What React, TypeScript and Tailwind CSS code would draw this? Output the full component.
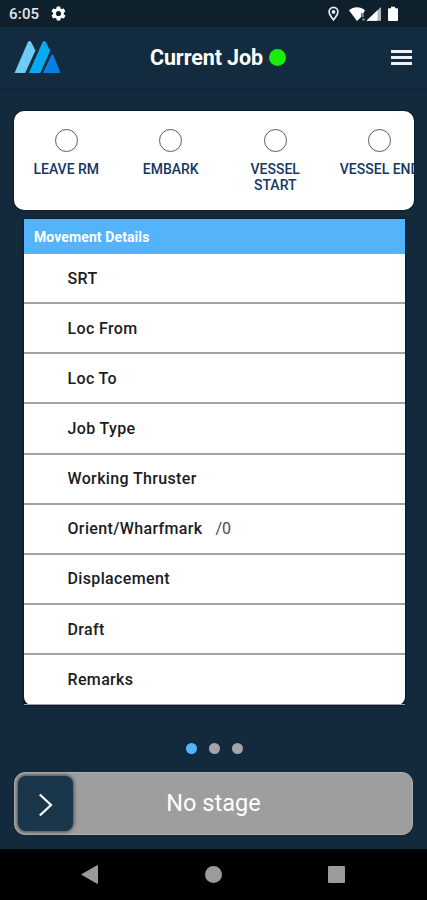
import React from 'react';

const stages = ['LEAVE RM', 'EMBARK', 'VESSEL START', 'VESSEL END'];

const details = [
  { label: 'SRT' },
  { label: 'Loc From' },
  { label: 'Loc To' },
  { label: 'Job Type' },
  { label: 'Working Thruster' },
  { label: 'Orient/Wharfmark', value: '/0' },
  { label: 'Displacement' },
  { label: 'Draft' },
  { label: 'Remarks' },
];

const StatusBar = () => (
  <div className="h-[27px] shrink-0 bg-[#0f202d] flex items-center justify-between pl-[9px] pr-[28px] text-white">
    <div className="flex items-center gap-[11px]">
      <span className="pt-px text-[15px] leading-none font-medium tracking-[0.2px] text-[#e4e7e9]">6:05</span>
      <svg width="17" height="17" viewBox="0 0 24 24" fill="white">
        <path d="M19.4 13a7.5 7.5 0 0 0 0-2l2.1-1.7c.2-.1.2-.4.1-.6l-2-3.5c-.1-.2-.4-.3-.6-.2l-2.5 1a7.3 7.3 0 0 0-1.7-1l-.4-2.6a.5.5 0 0 0-.5-.4h-4a.5.5 0 0 0-.5.4L9 5a7.7 7.7 0 0 0-1.7 1l-2.5-1c-.2-.1-.5 0-.6.2l-2 3.5c-.1.2-.1.5.1.6L4.5 11a7.5 7.5 0 0 0 0 2l-2.1 1.7c-.2.1-.2.4-.1.6l2 3.5c.1.2.4.3.6.2l2.5-1a7.3 7.3 0 0 0 1.7 1l.4 2.6c0 .2.2.4.5.4h4c.2 0 .5-.2.5-.4L15 19a7.7 7.7 0 0 0 1.7-1l2.5 1c.2.1.5 0 .6-.2l2-3.5c.1-.2.1-.5-.1-.6L19.4 13z" />
        <circle cx="12" cy="12" r="3.6" fill="#0f202d" />
      </svg>
    </div>
    <svg width="72" height="18" viewBox="0 0 72 18">
      <path d="M6.5 14.8C4.1 11.8 2.1 9.7 2.1 6.7a4.4 4.4 0 0 1 8.8 0c0 3-2 5.1-4.4 8.1z" fill="none" stroke="#e8ebed" strokeWidth="1.7" />
      <circle cx="6.5" cy="6.9" r="1.9" fill="#e8ebed" />
      <path d="M22 5.2C26.500 1.3 33.500 1.3 38 5.2L36.500 8H34v4.300L30 16z" fill="white" />
      <path d="M35.500 8v4M36.500 13.500v2" fill="none" stroke="#9aa3a9" strokeWidth="2" />
      <path d="M39.5 15.7L54 2v13.7z" fill="#b4bbc0" />
      <path d="M39.5 15.7L50.5 5.3v10.4z" fill="white" />
      <path d="M62 3.2h2V1.7h4v1.5h2a1 1 0 0 1 1 1v10.8a1 1 0 0 1-1 1h-8a1 1 0 0 1-1-1V4.2a1 1 0 0 1 1-1z" fill="white" />
    </svg>
  </div>
);

const Logo = () => (
  <svg width="48" height="34" viewBox="0 0 48 34">
    <path d="M.5 33L13.8 2.3Q15.5-.2 17.2 2.3L21.500 10.500 11.200 33z" fill="#6fcaf5" />
    <path d="M14.8 33L28.5 2.3Q30.2-.2 31.9 2.3L36.2 10.800 26.300 33z" fill="#05aaf1" />
    <path d="M29 33L37.1 15.5Q38.3 13.7 39.5 15.5L46.5 33z" fill="#087fe5" />
  </svg>
);

const Header = () => (
  <header className="h-[60px] shrink-0 bg-[#132b3e] grid grid-cols-[1fr_auto_1fr] items-center px-[14px]">
    <Logo />
    <div className="flex items-center gap-[6px] pl-[9px]">
      <h1 className="pt-px text-[21.5px] leading-none font-bold text-white tracking-[-0.1px]">Current Job</h1>
      <span className="w-[17px] h-[17px] rounded-full bg-[#18ee08]" />
    </div>
    <div className="justify-self-end mr-px w-[21px] flex flex-col gap-[3px]">
      <span className="h-[3px] bg-[#f0f1f2]" />
      <span className="h-[3px] bg-[#f0f1f2]" />
      <span className="h-[3px] bg-[#f0f1f2]" />
    </div>
  </header>
);

const StageCard = () => (
  <section className="ml-[14px] mr-[13.5px] h-[99px] shrink-0 rounded-[10px] bg-white overflow-hidden flex pt-[18px] shadow-[0_0_2px_#020a14]">
    {stages.map((stage) => (
      <div key={stage} className="w-[104.5px] shrink-0 flex flex-col items-center">
        <span className="w-[23px] h-[23px] rounded-full border-[1.5px] border-[#5c5c5c]" />
        <span className={`mt-[9px] text-[14px] leading-[16px] font-medium text-center text-[#173763] ${stage === 'VESSEL START' ? 'w-[70px]' : 'whitespace-nowrap'}`}>
          {stage}
        </span>
      </div>
    ))}
  </section>
);

const MovementDetails = () => (
  <section className="ml-[24px] mr-[22.5px] mt-[9px] shrink-0 bg-[#0a141c] shadow-[0_0_2px_#000a1c]">
    <h2 className="h-[35px] bg-[#54b4fb] flex items-center pl-[10px] text-[14px] leading-none font-bold tracking-[0.1px] text-white">
      Movement Details
    </h2>
    <div className="bg-white rounded-b-[8px]">
      {details.map((row) => (
        <div key={row.label} className="h-[50.15px] border-b-2 border-[#a3a3a3] flex items-center pt-px pl-[43.5px] text-[16px] leading-none last:border-b last:pt-0">
          <span className="font-medium text-[#1b1c24] tracking-[0.35px]">{row.label}</span>
          {row.value && <span className="ml-[13px] text-[#4b4b4b]">{row.value}</span>}
        </div>
      ))}
    </div>
  </section>
);

const SlideButton = () => (
  <div className="mx-[14px] mt-[18px] h-[63px] shrink-0 rounded-[11px] bg-[#9e9e9e] border border-[#aeaeae] relative flex items-center justify-center">
    <span className="text-[23.5px] leading-none text-white">No stage</span>
    <button className="absolute left-[3px] top-[3px] w-[55px] h-[55px] rounded-[8px] bg-[#1a364a] shadow-[0_0_4px_#222] flex items-center justify-center">
      <svg width="14" height="24" viewBox="0 0 14 24" fill="none" stroke="white" strokeWidth="2.2" className="relative top-px">
        <path d="M.8 1.5L12 12 .8 22.5" />
      </svg>
    </button>
  </div>
);

const NavBar = () => (
  <nav className="h-[51px] shrink-0 mt-auto bg-black flex items-center justify-between pl-[81px] pr-[82px]">
    <svg width="17" height="19" viewBox="0 0 17 19" fill="#9b9b9b">
      <path d="M0 9.5L16 .3q1-.3 1 .7v17q0 1-1 .7z" />
    </svg>
    <span className="w-[17px] h-[17px] rounded-full bg-[#9b9b9b]" />
    <span className="w-[17px] h-[17px] rounded-[1px] bg-[#9b9b9b]" />
  </nav>
);

const App = () => {
  return (
    <div className="w-full h-[900px] flex flex-col overflow-hidden bg-[#132a3c] font-['Roboto',sans-serif]">
      <StatusBar />
      <Header />
      <div className="h-[4px] shrink-0 mb-[20px] bg-[#11263a]" />
      <StageCard />
      <MovementDetails />
      <div className="flex justify-center gap-[12px] mt-[38px] pl-[1px]">
        <span className="w-[11px] h-[11px] rounded-full bg-[#54b4fb]" />
        <span className="w-[11px] h-[11px] rounded-full bg-[#a3a3a8]" />
        <span className="w-[11px] h-[11px] rounded-full bg-[#a3a3a8]" />
      </div>
      <SlideButton />
      <NavBar />
    </div>
  );
};

export default App;
